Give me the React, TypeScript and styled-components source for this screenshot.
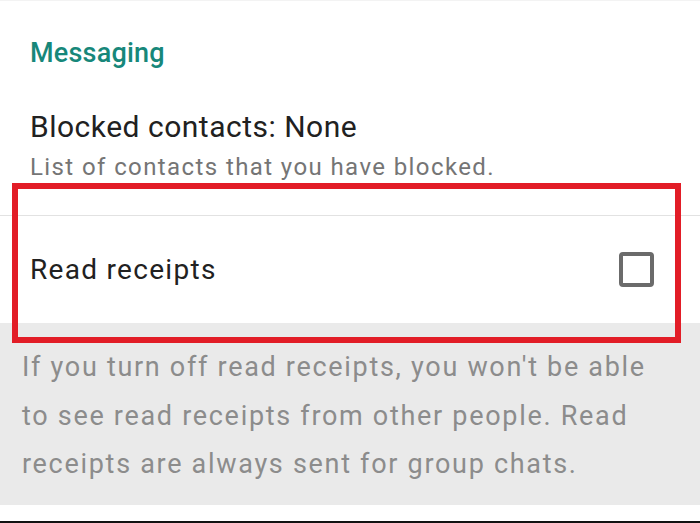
import React from 'react';
import styled, { createGlobalStyle } from 'styled-components';

// Settings > Account > Privacy - bloco "Messaging" com destaque em vermelho

const GlobalStyle = createGlobalStyle`
  html, body {
    margin: 0;
    padding: 0;
    background: #ffffff;
  }
  body {
    font-family: Roboto, "Noto Sans", "Liberation Sans", sans-serif;
    overflow: hidden;
  }
`;

const Screen = styled.div`
  position: relative;
  width: 700px;
  height: 523px;
  display: flex;
  flex-direction: column;
  background: #ffffff;
  border-top: 1px solid #f3f3f3;
  box-sizing: border-box;
  overflow: hidden;
`;

const SectionHeader = styled.div`
  padding: 36px 30px 0;
  font-size: 27px;
  line-height: 32px;
  font-weight: 500;
  color: #17877a;
  letter-spacing: 0.2px;
`;

const Item = styled.div`
  padding: 40px 30px 34px;
  display: flex;
  flex-direction: column;
  gap: 8px;
`;

const Title = styled.div<{ $size?: number; $spacing?: number }>`
  font-size: ${(p) => p.$size ?? 30}px;
  letter-spacing: ${(p) => p.$spacing ?? 0.5}px;
  line-height: 36px;
  color: #212121;
`;

const Subtitle = styled.div`
  font-size: 24px;
  letter-spacing: 1.4px;
  line-height: 28px;
  color: #757575;
`;

const Divider = styled.div`
  height: 1px;
  background: #e2e2e2;
`;

const ToggleRow = styled.div`
  height: 107px;
  padding: 0 46px 0 30px;
  display: flex;
  align-items: center;
  justify-content: space-between;
`;

const Checkbox = styled.div`
  width: 35px;
  height: 35px;
  border: 4px solid #6b6b6b;
  border-radius: 4px;
  box-sizing: border-box;
`;

const Info = styled.div`
  background: #eaeaea;
  padding: 20px 22px 16px;
  font-size: 27px;
  letter-spacing: 1.7px;
  line-height: 48.5px;
  color: #8c8c8c;
  white-space: nowrap;
`;

const Spacer = styled.div`
  flex: 1;
  background: #ffffff;
`;

const BottomEdge = styled.div`
  height: 2px;
  background: #111111;
`;

const Highlight = styled.div`
  position: absolute;
  left: 12px;
  top: 182px;
  width: 669px;
  height: 160px;
  border: 6px solid #e21d27;
  box-sizing: border-box;
  pointer-events: none;
`;

export default function App() {
  return (
    <>
      <GlobalStyle />
      <Screen>
        <SectionHeader>Messaging</SectionHeader>

        <Item>
          <Title>Blocked contacts: None</Title>
          <Subtitle>List of contacts that you have blocked.</Subtitle>
        </Item>

        <Divider />

        <ToggleRow>
          <Title $size={28} $spacing={1.3}>Read receipts</Title>
          <Checkbox />
        </ToggleRow>

        <Info>
          If you turn off read receipts, you won't be able
          <br />
          to see read receipts from other people. Read
          <br />
          receipts are always sent for group chats.
        </Info>

        <Spacer />
        <BottomEdge />

        <Highlight />
      </Screen>
    </>
  );
}
